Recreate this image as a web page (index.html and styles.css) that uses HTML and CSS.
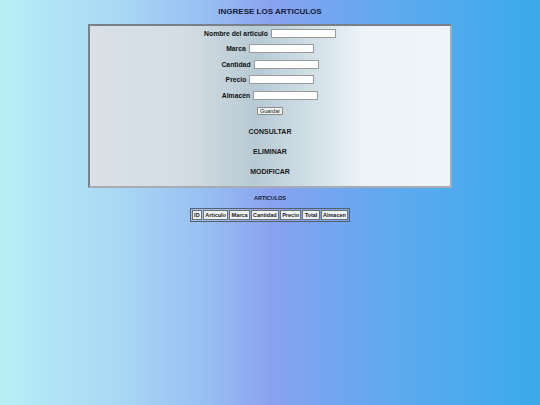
FILE: index.html
```html
<!DOCTYPE html>
<html lang="es">
<head>
<meta charset="utf-8">
<title>Artículos</title>
<link rel="stylesheet" href="styles.css">
</head>
<body>
<div class="page">
  <h1 class="title">INGRESE LOS ARTICULOS</h1>
  <div class="panel">
    <form class="form">
      <div class="row"><label class="label">Nombre del articulo</label><input class="field" type="text"></div>
      <div class="row"><label class="label">Marca</label><input class="field" type="text"></div>
      <div class="row"><label class="label">Cantidad</label><input class="field" type="text"></div>
      <div class="row"><label class="label">Precio</label><input class="field" type="text"></div>
      <div class="row"><label class="label">Almacén</label><input class="field" type="text"></div>
      <button class="save" type="button">Guardar</button>
    </form>
    <div class="actions">
      <div class="action">CONSULTAR</div>
      <div class="action">ELIMINAR</div>
      <div class="action">MODIFICAR</div>
    </div>
  </div>
  <h2 class="subtitle">ARTICULOS</h2>
  <table class="grid">
    <tr>
      <th>ID</th><th>Articulo</th><th>Marca</th><th>Cantidad</th><th>Precio</th><th>Total</th><th>Almacen</th>
    </tr>
  </table>
</div>
</body>
</html>
```

FILE: styles.css
```css
html, body {
  margin: 0;
  padding: 0;
  height: 100%;
}
body {
  font-family: "Liberation Sans", Arial, sans-serif;
  background: linear-gradient(to right, #b7eff6 0%, #a9d8f4 22%, #98bff2 38%, #8aa2ef 50%, #72a6f0 62%, #5aaaef 76%, #3aaaea 100%);
  color: #111;
}
.page {
  display: flex;
  flex-direction: column;
  align-items: center;
}
.title {
  margin: 0;
  padding-top: 7px;
  font-size: 8px;
  line-height: 10px;
  font-weight: bold;
  color: #141c38;
}
.panel {
  margin-top: 7px;
  width: 360px;
  height: 158px;
  border: 2px solid #8a929a;
  border-top-color: #78808a;
  border-left-color: #78808a;
  border-right-color: #a6acb2;
  border-bottom-color: #a6acb2;
  background: linear-gradient(to right, #d9e1e7 0%, #d4dde3 26%, #b7cad4 46%, #d9e5ec 66%, #edf4f8 76%, #eef5f8 100%);
  display: flex;
  flex-direction: column;
  align-items: center;
  padding-top: 2px;
  box-sizing: content-box;
}
.form {
  display: flex;
  flex-direction: column;
  align-items: center;
  gap: 5.5px;
}
.row {
  display: flex;
  align-items: center;
  gap: 3px;
  height: 10px;
}
.label {
  font-size: 6.8px;
  font-weight: bold;
  color: #111;
}
.field {
  width: 63px;
  height: 7px;
  margin: 0;
  padding: 0;
  border: 1px solid #9a9a9a;
  background: #fff;
}
.save {
  margin-top: 1.5px;
  height: 8px;
  padding: 0 2px;
  font-family: "Liberation Sans", Arial, sans-serif;
  font-size: 5.5px;
  line-height: 6px;
  color: #222;
  background: #f2f2f2;
  border: 1px solid #8a8a8a;
  border-radius: 1px;
}
.actions {
  margin-top: 12px;
  display: flex;
  flex-direction: column;
  align-items: center;
  gap: 10px;
}
.action {
  font-size: 7px;
  line-height: 10px;
  font-weight: bold;
  color: #1a1a1a;
}
.subtitle {
  margin: 6px 0 0;
  font-size: 5.5px;
  line-height: 8px;
  font-weight: bold;
  color: #141c38;
}
.grid {
  margin-top: 6px;
  border-collapse: separate;
  border-spacing: 1px;
  border: 1px solid #5a606a;
}
.grid th {
  height: 8px;
  padding: 0 1.3px;
  font-size: 5.5px;
  line-height: 8px;
  font-weight: bold;
  color: #1a1a1a;
  background: #eef1f5;
  border: 1px solid #6a707a;
}
```
